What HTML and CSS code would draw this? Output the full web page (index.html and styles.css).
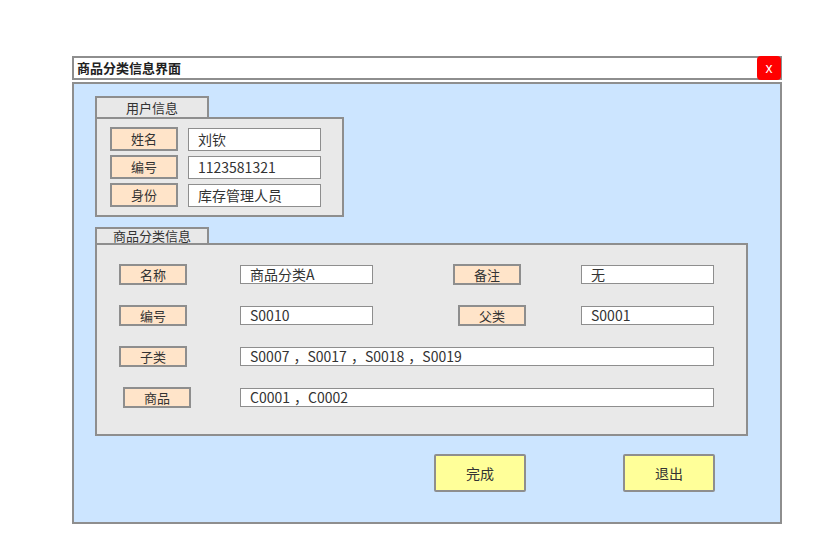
FILE: index.html
```html
<!DOCTYPE html>
<html lang="zh">
<head>
<meta charset="utf-8">
<title>商品分类信息界面</title>
<link rel="stylesheet" href="styles.css">
</head>
<body>
<div class="window">
  <div class="titlebar">
    <span class="title">商品分类信息界面</span>
    <span class="close">x</span>
  </div>
  <div class="panel">
    <div class="tab">用户信息</div>
    <div class="box user-box">
      <div class="urow"><span class="label">姓名</span><span class="input">刘钦</span></div>
      <div class="urow"><span class="label">编号</span><span class="input">1123581321</span></div>
      <div class="urow"><span class="label">身份</span><span class="input">库存管理人员</span></div>
    </div>
    <div class="tab tab-cat">商品分类信息</div>
    <div class="box cat-box">
      <div class="crow">
        <span class="label l1">名称</span><span class="input i1">商品分类A</span>
        <span class="label r1">备注</span><span class="input ri1">无</span>
      </div>
      <div class="crow">
        <span class="label l1">编号</span><span class="input i1">S0010</span>
        <span class="label r2">父类</span><span class="input ri2">S0001</span>
      </div>
      <div class="crow">
        <span class="label l1">子类</span><span class="input i1 wide list">S0007<span class="comma">，</span>S0017<span class="comma">，</span>S0018<span class="comma">，</span>S0019</span>
      </div>
      <div class="crow">
        <span class="label l4">商品</span><span class="input i4 wide list">C0001<span class="comma">，</span>C0002</span>
      </div>
    </div>
    <div class="buttons">
      <span class="btn">完成</span>
      <span class="btn btn2">退出</span>
    </div>
  </div>
</div>
</body>
</html>
```
FILE: styles.css
```css
* { box-sizing: border-box; }
body {
  margin: 0;
  background: #ffffff;
  font-family: "Noto Sans CJK SC", "Noto Sans", sans-serif;
  color: #333333;
}
.window {
  width: 710px;
  margin: 56px 0 0 72px;
}
.titlebar {
  position: relative;
  height: 24px;
  border: 2px solid #8e8e8e;
  background: #ffffff;
  display: flex;
  align-items: center;
  padding-left: 3px;
}
.title {
  font-size: 13px;
  font-weight: bold;
  color: #222;
  line-height: 20px;
}
.close {
  position: absolute;
  top: -2px;
  right: -1px;
  width: 24px;
  height: 24px;
  background: #ff0000;
  border-radius: 4px;
  color: #ffffff;
  font-family: "Liberation Sans", sans-serif;
  font-size: 14px;
  line-height: 24px;
  text-align: center;
}
.panel {
  margin-top: 2px;
  height: 442px;
  border: 2px solid #8e8e8e;
  background: #cce5ff;
  padding: 12px 0 0 21px;
}
.tab {
  width: 114px;
  height: 21px;
  border: 2px solid #8e8e8e;
  border-bottom: none;
  background: #e8e8e8;
  font-size: 13px;
  line-height: 19px;
  text-align: center;
}
.tab-cat {
  margin-top: 10px;
  height: 16px;
  line-height: 14px;
}
.box {
  border: 2px solid #8e8e8e;
  background: #e9e9e9;
}
.user-box {
  width: 249px;
  padding: 8px 0 8px 13px;
  display: flex;
  flex-direction: column;
  gap: 4px;
}
.urow {
  display: flex;
  align-items: center;
  height: 24px;
}
.label {
  display: block;
  width: 68px;
  background: #ffe4c9;
  border: 2px solid #8e8e8e;
  font-size: 13px;
  text-align: center;
  color: #333;
}
.urow .label {
  height: 24px;
  line-height: 20px;
}
.input {
  display: block;
  background: #ffffff;
  border: 1px solid #8e8e8e;
  font-size: 14px;
  padding-left: 9px;
  color: #333;
  white-space: nowrap;
}
.urow .input {
  margin-left: 10px;
  width: 133px;
  height: 23px;
  line-height: 21px;
}
.cat-box {
  width: 653px;
  height: 193px;
  padding: 19px 0 0 0;
  display: flex;
  flex-direction: column;
  gap: 20px;
}
.crow {
  display: flex;
  align-items: center;
  height: 21px;
}
.crow .label {
  height: 21px;
  line-height: 17px;
}
.crow .input {
  width: 133px;
  height: 19px;
  line-height: 17px;
}
.comma {
  display: inline-block;
  padding-left: 4px;
}
.l1 { margin-left: 22px; }
.l4 { margin-left: 26px; }
.i1 { margin-left: 53px; }
.i4 { margin-left: 49px; }
.r1 { margin-left: 80px; }
.r2 { margin-left: 85px; }
.ri1 { margin-left: 60px; }
.ri2 { margin-left: 55px; }
.crow .wide { width: 474px; }
.buttons {
  display: flex;
  margin-top: 18px;
  padding-left: 339px;
}
.btn {
  display: block;
  width: 92px;
  height: 38px;
  background: #ffff99;
  border: 2px solid #8e8e8e;
  border-radius: 2px;
  font-size: 14px;
  line-height: 34px;
  text-align: center;
  color: #333;
}
.btn2 { margin-left: 97px; }
```
